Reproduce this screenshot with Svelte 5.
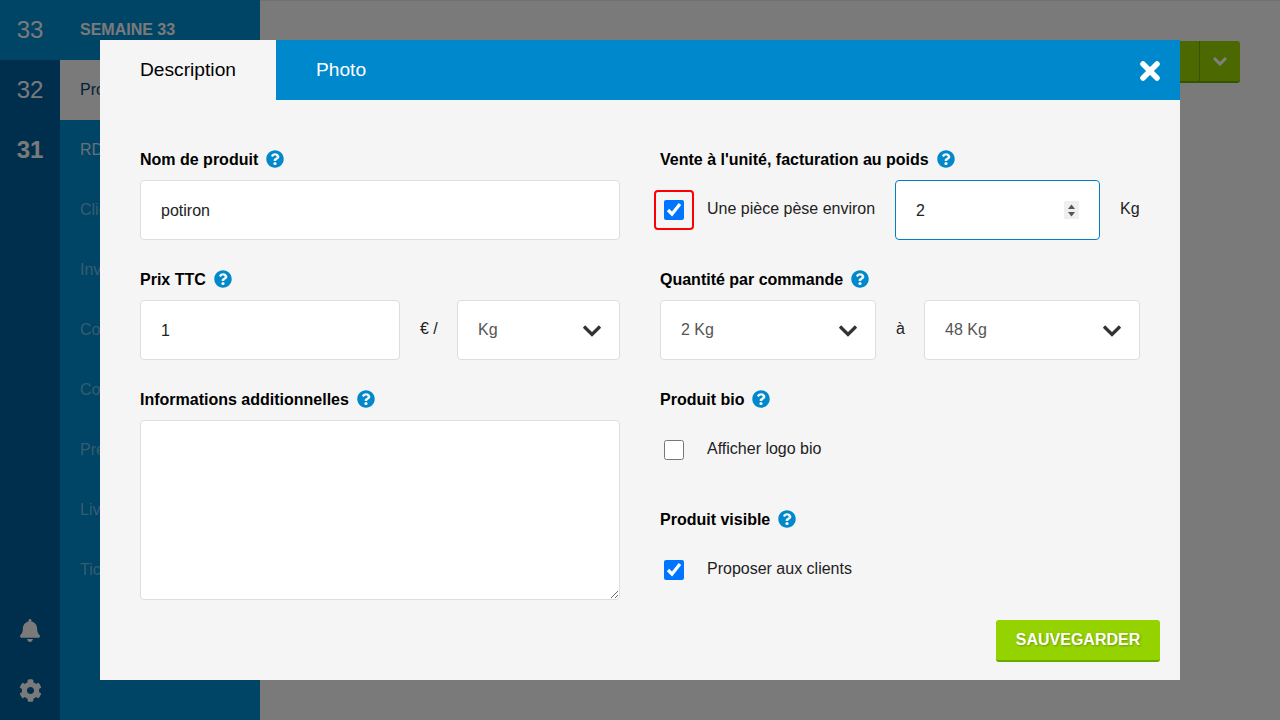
<script>
  import { onMount } from 'svelte';

  const weeks = [
    { num: 33, active: true },
    { num: 32 },
    { num: 31, bold: true }
  ];

  const menu = [
    { label: 'Produits', selected: true },
    { label: 'RDV', enabled: true },
    { label: 'Clients' },
    { label: 'Inventaire' },
    { label: 'Commandes' },
    { label: 'Comptes' },
    { label: 'Préparation' },
    { label: 'Livraison' },
    { label: 'Tickets' }
  ];

  const help = 'M504 256c0 136.997-111.043 248-248 248S8 392.997 8 256C8 119.083 119.043 8 256 8s248 111.083 248 248zM262.655 90c-54.497 0-89.255 22.957-116.549 63.758-3.536 5.286-2.353 12.415 2.715 16.258l34.699 26.31c5.205 3.947 12.621 3.008 16.665-2.122 17.864-22.658 30.113-35.797 57.303-35.797 20.429 0 45.698 13.148 45.698 32.958 0 14.976-12.363 22.667-32.534 33.976C247.128 238.528 216 254.941 216 296v4c0 6.627 5.373 12 12 12h56c6.627 0 12-5.373 12-12v-1.333c0-28.462 83.186-29.647 83.186-106.667 0-58.002-60.165-102-116.531-102zM256 338c-25.365 0-46 20.635-46 46 0 25.364 20.635 46 46 46s46-20.636 46-46c0-25.365-20.635-46-46-46z';

  let weightInput;

  onMount(() => {
    weightInput.focus();
  });
</script>

{#snippet helpIcon()}
  <svg class="help" viewBox="0 0 512 512" aria-hidden="true"><path d={help} /></svg>
{/snippet}

{#snippet chevron()}
  <svg class="chevron" viewBox="0 0 20 14" aria-hidden="true"><path d="M2 2.5l8 8 8-8" /></svg>
{/snippet}

<div class="page">
  <nav class="weeks">
    {#each weeks as w}
      <div class="week" class:active={w.active} class:bold={w.bold}>{w.num}</div>
    {/each}
    <div class="tools">
      <svg class="bell" viewBox="0 0 448 512" aria-hidden="true"><path d="M224 512c35.32 0 63.97-28.65 63.97-64H160.03c0 35.35 28.65 64 63.97 64zm215.39-149.71c-19.32-20.76-55.47-51.99-55.47-154.29 0-77.7-54.48-139.9-127.94-155.16V32c0-17.67-14.32-32-31.98-32s-31.98 14.33-31.98 32v20.84C118.56 68.1 64.08 130.3 64.08 208c0 102.3-36.15 133.53-55.47 154.29-6 6.45-8.66 14.16-8.61 21.71.11 16.4 12.98 32 32.1 32h383.8c19.12 0 32-15.6 32.1-32 .05-7.55-2.61-15.27-8.61-21.71z" /></svg>
      <svg class="cog" viewBox="0 0 512 512" aria-hidden="true"><path d="M487.4 315.7l-42.6-24.6c4.3-23.2 4.3-47 0-70.2l42.6-24.6c4.9-2.8 7.1-8.6 5.5-14-11.1-35.6-30-67.8-54.7-94.6-3.8-4.1-10-5.1-14.8-2.3L380.8 110c-17.9-15.4-38.5-27.3-60.8-35.1V25.8c0-5.6-3.9-10.5-9.4-11.7-36.7-8.2-74.3-7.8-109.2 0-5.5 1.2-9.4 6.1-9.4 11.7V75c-22.2 7.9-42.8 19.8-60.8 35.1L88.7 85.5c-4.9-2.8-11-1.9-14.8 2.3-24.7 26.7-43.6 58.9-54.7 94.6-1.7 5.4.6 11.2 5.5 14L67.3 221c-4.3 23.2-4.3 47 0 70.2l-42.6 24.6c-4.9 2.8-7.1 8.6-5.5 14 11.1 35.6 30 67.8 54.7 94.6 3.8 4.1 10 5.1 14.8 2.3l42.6-24.6c17.9 15.4 38.5 27.3 60.8 35.1v49.2c0 5.6 3.9 10.5 9.4 11.7 36.7 8.2 74.3 7.8 109.2 0 5.5-1.2 9.4-6.1 9.4-11.7v-49.2c22.2-7.9 42.8-19.8 60.8-35.1l42.6 24.6c4.9 2.8 11 1.9 14.8-2.3 24.7-26.7 43.6-58.9 54.7-94.6 1.5-5.5-.7-11.3-5.6-14.1zM256 336c-44.1 0-80-35.9-80-80s35.9-80 80-80 80 35.9 80 80-35.9 80-80 80z" /></svg>
    </div>
  </nav>

  <aside class="menu">
    <div class="menu-title">SEMAINE 33</div>
    {#each menu as item}
      <div class="menu-item" class:selected={item.selected} class:enabled={item.enabled}>{item.label}</div>
    {/each}
  </aside>

  <main class="content">
    <div class="split-button">
      <span class="split-main">Ajouter un produit</span>
      <span class="split-caret">
        <svg viewBox="0 0 16 10" aria-hidden="true"><path d="M2 2l6 6 6-6" /></svg>
      </span>
    </div>
  </main>
</div>

<div class="overlay">
  <div class="modal">
    <header class="tabs">
      <button class="tab current">Description</button>
      <button class="tab">Photo</button>
      <button class="close" aria-label="Fermer">
        <svg viewBox="0 0 22 22" aria-hidden="true"><path d="M4 4l14 14M18 4L4 18" /></svg>
      </button>
    </header>

    <form class="form" onsubmit={(e) => e.preventDefault()}>
      <div class="columns">
        <div class="column">
          <div class="field">
            <div class="label">Nom de produit {@render helpIcon()}</div>
            <input class="input entry" type="text" value="potiron" />
          </div>

          <div class="field">
            <div class="label">Prix TTC {@render helpIcon()}</div>
            <div class="row">
              <input class="input entry price" type="text" value="1" />
              <span class="unit spaced">€ /</span>
              <div class="select-wrap per-unit">
                <select class="input select"><option>Kg</option></select>
                {@render chevron()}
              </div>
            </div>
          </div>

          <div class="field last">
            <div class="label">Informations additionnelles {@render helpIcon()}</div>
            <textarea class="input area"></textarea>
          </div>
        </div>

        <div class="column">
          <div class="field">
            <div class="label">Vente à l'unité, facturation au poids {@render helpIcon()}</div>
            <div class="row">
              <span class="check-box flagged"><input type="checkbox" checked /></span>
              <span class="check-text">Une pièce pèse environ</span>
              <div class="weight-wrap">
                <input class="input entry weight" type="number" value="2" bind:this={weightInput} />
                <svg class="spinner" viewBox="0 0 15 18" aria-hidden="true">
                  <rect width="15" height="18" />
                  <path d="M7.5 3.5l3.5 4.5H4zM7.5 15.5L4 11h7z" />
                </svg>
              </div>
              <span class="unit kg">Kg</span>
            </div>
          </div>

          <div class="field">
            <div class="label">Quantité par commande {@render helpIcon()}</div>
            <div class="row">
              <div class="select-wrap qty">
                <select class="input select"><option>2 Kg</option></select>
                {@render chevron()}
              </div>
              <span class="unit spaced">à</span>
              <div class="select-wrap qty">
                <select class="input select"><option>48 Kg</option></select>
                {@render chevron()}
              </div>
            </div>
          </div>

          <div class="field short">
            <div class="label">Produit bio {@render helpIcon()}</div>
            <div class="row">
              <span class="check-box"><input type="checkbox" /></span>
              <span class="check-text">Afficher logo bio</span>
            </div>
          </div>

          <div class="field short last">
            <div class="label">Produit visible {@render helpIcon()}</div>
            <div class="row">
              <span class="check-box"><input type="checkbox" checked /></span>
              <span class="check-text">Proposer aux clients</span>
            </div>
          </div>
        </div>
      </div>

      <div class="actions">
        <button class="save" type="submit">SAUVEGARDER</button>
      </div>
    </form>
  </div>
</div>

<style>
  :global(body) {
    margin: 0;
    font-family: "Liberation Sans", Arial, sans-serif;
    overflow: hidden;
  }

  .page {
    display: flex;
    height: 720px;
    background: #f5f5f5;
  }

  /* left strip with the week numbers */
  .weeks {
    width: 60px;
    display: flex;
    flex-direction: column;
    background: #005e9c;
  }

  .week {
    height: 60px;
    display: flex;
    align-items: center;
    justify-content: center;
    font-size: 24px;
    color: #f5f5f5;
  }

  .week.active {
    background: #0088cc;
  }

  .week.bold {
    font-weight: bold;
  }

  .tools {
    margin-top: auto;
    display: flex;
    flex-direction: column;
    align-items: center;
    gap: 37px;
    padding-bottom: 18px;
    fill: #f5f5f5;
  }

  .bell {
    width: 20px;
    height: 23px;
  }

  .cog {
    width: 23px;
    height: 23px;
  }

  .menu {
    width: 200px;
    background: #0088cc;
    color: #f5f5f5;
  }

  .menu-title {
    height: 60px;
    line-height: 60px;
    padding-left: 20px;
    font-size: 16px;
    font-weight: bold;
  }

  .menu-item {
    height: 60px;
    line-height: 60px;
    padding-left: 20px;
    font-size: 16px;
    color: rgba(245, 245, 245, 0.45);
  }

  .menu-item.enabled {
    color: rgba(245, 245, 245, 0.85);
  }

  .menu-item.selected {
    background: #f5f5f5;
    color: #04456b;
  }

  .content {
    flex: 1;
    display: flex;
    justify-content: flex-end;
    align-items: flex-start;
    padding: 41px 40px 0;
    border-top: 1px solid #e0e0e0;
    box-sizing: border-box;
    height: 720px;
  }

  .split-button {
    display: flex;
    height: 42px;
    box-sizing: border-box;
    background: #96d200;
    border-bottom: 2px solid #6aa800;
    border-radius: 3px;
    margin-top: -1px;
    color: #fff;
    font-size: 16px;
    font-weight: bold;
  }

  .split-main {
    display: flex;
    align-items: center;
    padding: 0 20px;
    width: 200px;
    border-right: 1px solid #6aa800;
  }

  .split-caret {
    width: 40px;
    display: flex;
    align-items: center;
    justify-content: center;
  }

  .split-caret svg {
    width: 16px;
    height: 10px;
    fill: none;
    stroke: #fff;
    stroke-width: 3;
  }

  .overlay {
    position: fixed;
    inset: 0;
    background: rgba(0, 0, 0, 0.5);
    display: flex;
    align-items: center;
    justify-content: center;
  }

  .modal {
    width: 1080px;
    height: 640px;
    background: #f5f5f5;
    display: flex;
    flex-direction: column;
  }

  .tabs {
    height: 60px;
    flex: none;
    display: flex;
    align-items: stretch;
    background: #0088cc;
  }

  .tab {
    padding: 0 40px;
    border: 0;
    background: transparent;
    color: #fff;
    font: 19.2px "Liberation Sans", Arial, sans-serif;
  }

  .tab.current {
    background: #f5f5f5;
    color: #000;
  }

  .close {
    margin-left: auto;
    margin-right: 18px;
    width: 24px;
    padding: 0;
    border: 0;
    background: transparent;
    display: flex;
    align-items: center;
    justify-content: center;
    position: relative;
    top: 1px;
  }

  .close svg {
    width: 22px;
    height: 22px;
    fill: none;
    stroke: #fff;
    stroke-width: 5.5;
    stroke-linecap: round;
  }

  .form {
    flex: 1;
    min-height: 0;
    display: flex;
    flex-direction: column;
    justify-content: space-between;
    padding: 50px 20px 18px 40px;
  }

  .columns {
    display: grid;
    grid-template-columns: 480px 480px;
    gap: 40px;
  }

  .field {
    margin-bottom: 30px;
  }

  .field.short {
    margin-bottom: 40px;
  }

  .field.last {
    margin-bottom: 0;
  }

  .field.short .row {
    height: 40px;
    margin-top: 20px;
  }

  .label {
    height: 20px;
    margin-bottom: 10px;
    display: flex;
    align-items: center;
    gap: 8px;
    font-size: 16px;
    font-weight: bold;
    color: #000;
  }

  .help {
    width: 18px;
    height: 18px;
    fill: #0088cc;
    margin-top: -2px;
  }

  .row {
    display: flex;
    align-items: center;
  }

  .input {
    display: block;
    width: 100%;
    height: 60px;
    box-sizing: border-box;
    margin: 0;
    padding: 0 20px;
    background: #fff;
    border: 1px solid #ddd;
    border-radius: 4px;
    font: 16px "Liberation Sans", Arial, sans-serif;
    color: #222;
    outline: none;
  }

  .input:focus {
    border-color: #0080c4;
  }

  .entry {
    padding-top: 1px;
  }

  .price {
    width: 260px;
    flex: none;
  }

  .unit {
    font-size: 16px;
    color: #222;
    position: relative;
    top: -1px;
    white-space: nowrap;
  }

  .spaced {
    flex: 1;
    margin-left: 20px;
  }

  .kg {
    width: 20px;
    flex: none;
    margin-left: 20px;
  }

  .select-wrap {
    position: relative;
    flex: none;
  }

  .per-unit {
    width: 163px;
  }

  .qty {
    width: 216px;
  }

  .select {
    appearance: none;
    padding-bottom: 2px;
    color: #555;
    cursor: pointer;
  }

  .chevron {
    position: absolute;
    right: 18.5px;
    top: 24px;
    width: 20px;
    height: 14px;
    fill: none;
    stroke: #333;
    stroke-width: 3.2;
    pointer-events: none;
  }

  .area {
    height: 180px;
    padding: 10px 20px;
    resize: vertical;
  }

  .check-box {
    width: 40px;
    height: 40px;
    box-sizing: border-box;
    flex: none;
    display: flex;
    align-items: center;
    justify-content: center;
    margin-left: -6px;
    border: 2px solid transparent;
    border-radius: 4px;
  }

  .check-box.flagged {
    border-color: #f00;
  }

  .check-box input {
    width: 20px;
    height: 20px;
    margin: 0;
  }

  .check-text {
    margin-left: 13px;
    font-size: 16px;
    color: #222;
    white-space: nowrap;
    position: relative;
    top: -1px;
  }

  .weight-wrap {
    position: relative;
    width: 205px;
    flex: none;
    margin-left: auto;
  }

  .weight::-webkit-inner-spin-button {
    appearance: none;
  }

  .spinner {
    position: absolute;
    top: 21px;
    right: 21px;
    width: 15px;
    height: 18px;
    fill: #555;
    pointer-events: none;
  }

  .spinner rect {
    fill: #efefef;
  }

  .actions {
    display: flex;
    justify-content: flex-end;
  }

  .save {
    width: 164px;
    height: 42px;
    padding: 0;
    border: 0;
    border-bottom: 2px solid #69a800;
    border-radius: 3px;
    background: #94d200;
    color: #fff;
    font: bold 16px "Liberation Sans", Arial, sans-serif;
    text-shadow: 1px 1px 2px rgba(0, 0, 0, 0.25);
  }
</style>
